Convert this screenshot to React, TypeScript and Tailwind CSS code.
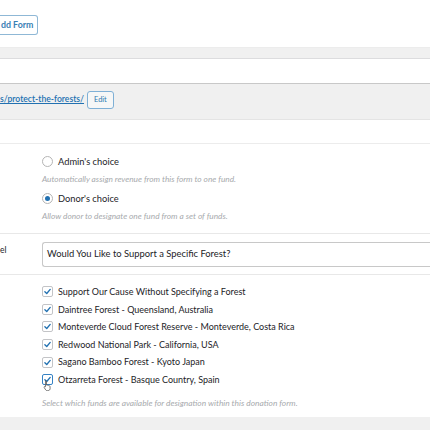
const funds = [
  'Support Our Cause Without Specifying a Forest',
  'Daintree Forest - Queensland, Australia',
  'Monteverde Cloud Forest Reserve - Monteverde, Costa Rica',
  'Redwood National Park - California, USA',
  'Sagano Bamboo Forest - Kyoto Japan',
  'Otzarreta Forest - Basque Country, Spain',
]

function Check({ focus }: { focus?: boolean }) {
  return (
    <span
      className={`relative flex h-[11px] w-[11px] shrink-0 items-center justify-center rounded-[2px] bg-white ${
        focus ? 'border-[1.5px] border-[#3582c4]' : 'border border-[#c3c4c7]'
      }`}
    >
      <svg viewBox="0 0 12 12" className="h-[9px] w-[9px]">
        <path d="M2.5 6.2 L5 8.6 L9.6 3.2" fill="none" stroke="#2271b1" strokeWidth="1.8" strokeLinecap="round" strokeLinejoin="round" />
      </svg>
      {focus && (
        <svg viewBox="0 0 12 14" className="absolute left-[0px] top-[5px] h-[11px] w-[10px]">
          <path
            d="M3 1.2c.7 0 1.1.5 1.1 1.1v4.2l.3-.1c.6-.2 1.1.1 1.3.5.5-.3 1.2-.1 1.4.4.6-.2 1.3.1 1.4.8l.2 2.6c0 1.6-1.1 2.9-2.7 2.9H5.1c-.9 0-1.6-.4-2.1-1.1L1.2 9.7c-.4-.6-.2-1.3.4-1.5.4-.2.9 0 1.2.3V2.3c0-.6.3-1.1 1-1.1z"
            fill="#fff"
            stroke="#444"
            strokeWidth="0.9"
          />
        </svg>
      )}
    </span>
  )
}

export default function App() {
  return (
    <div className="h-[430px] w-[430px] overflow-hidden bg-white font-['Lato',sans-serif] text-[#1d2327]">
      <div className="flex h-[47px] items-start pt-[15px]">
        <span className="flex h-[20px] items-center rounded-r-[3px] border border-l-0 border-[#8fb8d6] bg-white pl-[1px] pr-[4px] text-[8.8px] font-bold text-[#3a7fb5]">
          dd Form
        </span>
      </div>
      <div className="h-[12px] border-y border-b-[#dcdcde] border-t-[#ececec] bg-[#f0f0f0]" />
      <div className="h-[24px]" />
      <div className="flex h-[37px] items-center gap-[3px] border-t border-b border-t-[#c8c8c8] border-b-[#e4e4e4] bg-[#f0f0f0] pb-[4px]">
        <span className="text-[8.6px] font-semibold text-[#2271b1] underline">s/protect-the-forests/</span>
        <span className="flex h-[18px] items-center rounded-[3px] border border-[#7fb0d6] bg-[#f6f7f7] px-[6px] text-[7.4px] text-[#2f78b0]">
          Edit
        </span>
      </div>
      <div className="h-[24px] border-b border-[#ececec]" />
      <div className="flex flex-col border-b border-[#e8e8e8] pb-[9px] pl-[42px] pt-[10px]">
        <div className="flex h-[15px] items-center gap-[5px]">
          <span className="h-[11px] w-[11px] rounded-full border border-[#b5b5b5] bg-white" />
          <span className="text-[9.3px]">Admin's choice</span>
        </div>
        <div className="mt-[3px] h-[15px] text-[8.3px] italic leading-[15px] text-[#a7aaad]">
          Automatically assign revenue from this form to one fund.
        </div>
        <div className="mt-[4px] flex h-[15px] items-center gap-[5px]">
          <span className="flex h-[11px] w-[11px] items-center justify-center rounded-full border border-[#b5b5b5] bg-white">
            <span className="h-[5px] w-[5px] rounded-full bg-[#2271b1]" />
          </span>
          <span className="text-[9.3px]">Donor's choice</span>
        </div>
        <div className="mt-[3px] h-[15px] text-[8.3px] italic leading-[15px] text-[#a7aaad]">
          Allow donor to designate one fund from a set of funds.
        </div>
      </div>
      <div className="flex h-[41px] items-center border-b border-[#e8e8e8]">
        <span className="-mt-[8px] w-[42px] text-[8.5px]">el</span>
        <div className="flex h-[25px] flex-1 items-center rounded-l-[3px] border border-r-0 border-[#c8c8c8] pl-[4px] text-[9.4px]">
          Would You Like to Support a Specific Forest?
        </div>
      </div>
      <div className="flex flex-col pl-[42px] pt-[8px]">
        {funds.map((f, i) => (
          <div key={f} className="flex h-[17.6px] items-center gap-[5px]">
            <Check focus={i === funds.length - 1} />
            <span className="text-[9px]">{f}</span>
          </div>
        ))}
        <div className="mt-[7px] h-[14px] text-[8.4px] italic leading-[14px] text-[#a7aaad]">
          Select which funds are available for designation within this donation form.
        </div>
      </div>
      <div className="mt-[7px] h-[40px] bg-[#f0f0f0]" />
    </div>
  )
}
